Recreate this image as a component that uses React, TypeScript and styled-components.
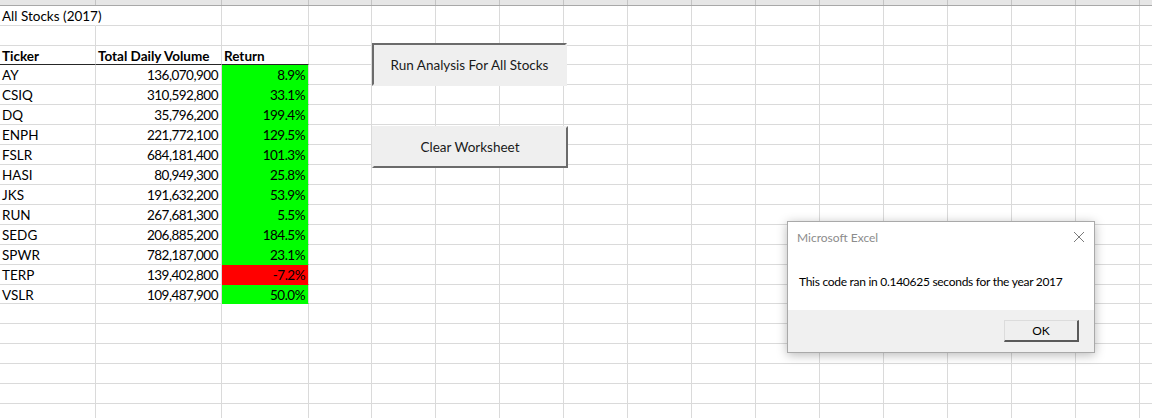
import React from "react";
import styled, { createGlobalStyle } from "styled-components";

const GlobalStyle = createGlobalStyle`
  html, body {
    margin: 0;
    padding: 0;
    background: #ffffff;
  }
  body {
    font-family: "Lato", "Liberation Sans", sans-serif;
  }
`;

interface IStock {
  ticker: string;
  volume: string;
  ret: string;
}

const stocks: IStock[] = [
  { ticker: "AY", volume: "136,070,900", ret: "8.9%" },
  { ticker: "CSIQ", volume: "310,592,800", ret: "33.1%" },
  { ticker: "DQ", volume: "35,796,200", ret: "199.4%" },
  { ticker: "ENPH", volume: "221,772,100", ret: "129.5%" },
  { ticker: "FSLR", volume: "684,181,400", ret: "101.3%" },
  { ticker: "HASI", volume: "80,949,300", ret: "25.8%" },
  { ticker: "JKS", volume: "191,632,200", ret: "53.9%" },
  { ticker: "RUN", volume: "267,681,300", ret: "5.5%" },
  { ticker: "SEDG", volume: "206,885,200", ret: "184.5%" },
  { ticker: "SPWR", volume: "782,187,000", ret: "23.1%" },
  { ticker: "TERP", volume: "139,402,800", ret: "-7.2%" },
  { ticker: "VSLR", volume: "109,487,900", ret: "50.0%" },
];

const columns = "ABCDEFGHIJKLMNOPQ".split("");
const COLS = "96px 126px 87px 63px repeat(13, 64px)";

const Sheet = styled.div`
  position: relative;
  width: 1152px;
  height: 418px;
  overflow: hidden;
  background: #fff;
`;

const Grid = styled.div`
  display: flex;
  flex-direction: column;
`;

// column header strip, only its lower edge is in view
const HeaderBar = styled.div`
  display: grid;
  grid-template-columns: ${COLS};
  height: 6px;
  background: #e6e6e6;
  border-bottom: 1px solid #a8a8a8;
  box-sizing: border-box;
`;

const HeaderCell = styled.div`
  border-right: 1px solid #c4c4c4;
`;

const Row = styled.div<{ $h?: number }>`
  display: grid;
  grid-template-columns: ${COLS};
  height: ${(p) => p.$h ?? 20}px;
`;

interface ICellProps {
  $align?: "left" | "right";
  $bold?: boolean;
  $fill?: string;
  $spill?: boolean;
  $underline?: boolean;
  $num?: boolean;
}

const Cell = styled.div<ICellProps>`
  display: flex;
  align-items: center;
  justify-content: ${(p) => (p.$align === "right" ? "flex-end" : "flex-start")};
  padding: 1px 3px 0 2px;
  box-sizing: border-box;
  font-size: 13.5px;
  letter-spacing: ${(p) => (p.$num ? "-0.5px" : "0")};
  font-weight: ${(p) => (p.$bold ? 700 : 400)};
  color: #000;
  white-space: nowrap;
  overflow: ${(p) => (p.$spill ? "visible" : "hidden")};
  background: ${(p) => p.$fill ?? "transparent"};
  border-right: 1px solid ${(p) => (p.$spill ? "transparent" : "#dadada")};
  border-bottom: 1px solid
    ${(p) => (p.$underline ? "#262626" : p.$fill ? p.$fill : "#dadada")};
  position: relative;
  z-index: ${(p) => (p.$spill ? 1 : 0)};
`;

const SheetButton = styled.div<{ $pressed?: boolean; $top: number; $h: number }>`
  position: absolute;
  left: 372px;
  top: ${(p) => p.$top}px;
  width: ${(p) => (p.$pressed ? 195 : 196)}px;
  height: ${(p) => p.$h}px;
  box-sizing: border-box;
  display: flex;
  align-items: center;
  justify-content: center;
  background: #efefef;
  font-size: 13.5px;
  color: #1a1a1a;
  border-top: 2px solid ${(p) => (p.$pressed ? "#6b6b6b" : "#efefef")};
  border-left: 2px solid ${(p) => (p.$pressed ? "#6b6b6b" : "#efefef")};
  border-right: 2px solid ${(p) => (p.$pressed ? "#efefef" : "#6b6b6b")};
  border-bottom: 2px solid ${(p) => (p.$pressed ? "#efefef" : "#6b6b6b")};
  z-index: 2;
`;

const Dialog = styled.div`
  position: absolute;
  left: 787px;
  top: 221px;
  width: 308px;
  height: 132px;
  box-sizing: border-box;
  background: #fff;
  border: 1px solid #a9a9a9;
  box-shadow: 0 2px 10px rgba(0, 0, 0, 0.28);
  display: flex;
  flex-direction: column;
  font-family: "Lato", "Liberation Sans", sans-serif;
  z-index: 3;
`;

const TitleBar = styled.div`
  display: flex;
  align-items: center;
  justify-content: space-between;
  height: 30px;
  padding: 0 9px 0 9px;
  font-size: 12px;
  color: #8c8c8c;
`;

const Body = styled.div`
  display: flex;
  align-items: center;
  flex: 1;
  padding: 0 11px;
  font-size: 12px;
  letter-spacing: -0.28px;
  white-space: nowrap;
  color: #000;
`;

const Footer = styled.div`
  display: flex;
  align-items: center;
  justify-content: flex-end;
  height: 42px;
  padding: 0 15px 0 0;
  background: #f0f0f0;
`;

const OkButton = styled.div`
  width: 75px;
  height: 22px;
  box-sizing: border-box;
  display: flex;
  align-items: center;
  justify-content: center;
  background: #efefef;
  border-top: 1px solid #dcdcdc;
  border-left: 1px solid #dcdcdc;
  border-right: 2px solid #5a5a5a;
  border-bottom: 2px solid #5a5a5a;
  font-size: 12px;
  color: #000;
`;

const emptyCells = (from: number) =>
  columns.slice(from).map((c) => <Cell key={c} />);

const App = () => {
  const emptyRows = Array.from({ length: 6 }, (_, i) => i);
  return (
    <Sheet>
      <GlobalStyle />
      <Grid>
        <HeaderBar>
          {columns.map((c) => (
            <HeaderCell key={c} />
          ))}
        </HeaderBar>
        <Row>
          <Cell $spill>All Stocks (2017)</Cell>
          {emptyCells(1)}
        </Row>
        <Row>{emptyCells(0)}</Row>
        <Row $h={19}>
          <Cell $bold $underline>
            Ticker
          </Cell>
          <Cell $bold $underline>
            Total Daily Volume
          </Cell>
          <Cell $bold $underline>
            Return
          </Cell>
          {emptyCells(3)}
        </Row>
        {stocks.map((s, i) => {
          const neg = s.ret.startsWith("-");
          return (
            <Row key={s.ticker} $h={i === 11 ? 19 : 20}>
              <Cell>{s.ticker}</Cell>
              <Cell $align="right" $num>
                {s.volume}
              </Cell>
              <Cell $align="right" $num $fill={neg ? "#ff0000" : "#00ff00"}>
                {s.ret}
              </Cell>
              {emptyCells(3)}
            </Row>
          );
        })}
        {emptyRows.map((r) => (
          <Row key={r}>{emptyCells(0)}</Row>
        ))}
      </Grid>

      <SheetButton $pressed $top={43} $h={43}>
        Run Analysis For All Stocks
      </SheetButton>
      <SheetButton $top={126} $h={42}>
        Clear Worksheet
      </SheetButton>

      <Dialog>
        <TitleBar>
          <span>Microsoft Excel</span>
          <svg width="12" height="12" viewBox="0 0 12 12">
            <path d="M1 1 L11 11 M11 1 L1 11" stroke="#7a7a7a" strokeWidth="1" />
          </svg>
        </TitleBar>
        <Body>This code ran in 0.140625 seconds for the year 2017</Body>
        <Footer>
          <OkButton>OK</OkButton>
        </Footer>
      </Dialog>
    </Sheet>
  );
};

export default App;
